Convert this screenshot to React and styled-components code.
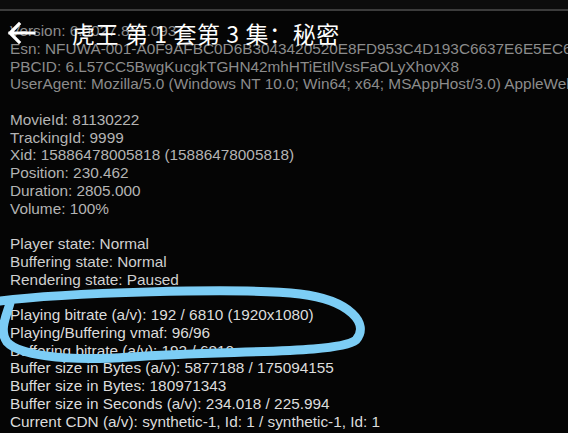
import React from 'react';
import styled, { createGlobalStyle } from 'styled-components';

const Global = createGlobalStyle`
  html, body {
    margin: 0;
    padding: 0;
    background: #050505;
    overflow: hidden;
  }
`;

const Screen = styled.div`
  position: relative;
  width: 568px;
  height: 433px;
  overflow: hidden;
  background: #050505;
  font-family: "Liberation Sans", Arial, sans-serif;
`;

const TopBar = styled.div`
  height: 9px;
  background: #0c0c0c;
  border-bottom: 2px solid #3c3c3c;
`;

const Info = styled.div`
  display: flex;
  flex-direction: column;
  padding: 11px 0 0 10px;
  white-space: nowrap;
`;

const Group = styled.div`
  display: flex;
  flex-direction: column;
  color: ${(p) => p.$color};
  margin-bottom: ${(p) => (p.$last ? 0 : '17.75px')};
`;

const Line = styled.div`
  font-size: 15.35px;
  line-height: 17.75px;
  height: 17.75px;
`;

const Header = styled.div`
  position: absolute;
  top: 20px;
  left: 6px;
  display: flex;
  align-items: center;
  gap: 36px;
  color: #fff;
`;

const Title = styled.div`
  font-family: "Noto Sans CJK SC", "Noto Sans CJK TC", sans-serif;
  font-size: 23px;
  line-height: 26px;
  letter-spacing: 0.6px;
`;

const Marker = styled.svg`
  position: absolute;
  left: 0;
  top: 0;
  pointer-events: none;
`;

const groups = [
  {
    color: '#8c8c8c',
    lines: [
      'Version: 6.0027.851.093',
      'Esn: NFUWA-001-A0F9AFBC0D6B3043420520E8FD953C4D193C6637E6E5EC6E8A',
      'PBCID: 6.L57CC5BwgKucgkTGHN42mhHTiEtIlVssFaOLyXhovX8',
      'UserAgent: Mozilla/5.0 (Windows NT 10.0; Win64; x64; MSAppHost/3.0) AppleWebKit/537.36',
    ],
  },
  {
    color: '#b4b4b4',
    lines: [
      'MovieId: 81130222',
      'TrackingId: 9999',
      'Xid: 15886478005818 (15886478005818)',
      'Position: 230.462',
      'Duration: 2805.000',
      'Volume: 100%',
    ],
  },
  {
    color: '#d0d0d0',
    lines: ['Player state: Normal', 'Buffering state: Normal', 'Rendering state: Paused'],
  },
  {
    color: '#dcdcdc',
    lines: [
      'Playing bitrate (a/v): 192 / 6810 (1920x1080)',
      'Playing/Buffering vmaf: 96/96',
      'Buffering bitrate (a/v): 192 / 6810',
      'Buffer size in Bytes (a/v): 5877188 / 175094155',
      'Buffer size in Bytes: 180971343',
      'Buffer size in Seconds (a/v): 234.018 / 225.994',
      'Current CDN (a/v): synthetic-1, Id: 1 / synthetic-1, Id: 1',
    ],
  },
];

const BackArrow = () => (
  <svg width="30" height="24" viewBox="0 0 30 24">
    <path d="M28 12H4M13 3L4 12l9 9" fill="none" stroke="#fff" strokeWidth="3.2" strokeLinecap="square" />
  </svg>
);

export default function App() {
  return (
    <Screen>
      <Global />
      <TopBar />
      <Info>
        {groups.map((g, i) => (
          <Group key={i} $color={g.color} $last={i === groups.length - 1}>
            {g.lines.map((l) => (
              <Line key={l}>{l}</Line>
            ))}
          </Group>
        ))}
      </Info>
      <Header>
        <BackArrow />
        <Title>虎王 第 1 套第 3 集：秘密</Title>
      </Header>
      <Marker width="568" height="433">
        <path
          d="M0 301 C60 293 240 287 300 294 C350 300 370 324 356 340 C338 354 230 350 130 357 C60 362 18 354 7 342 C-2 330 8 312 10 303"
          fill="none"
          stroke="#7ccdf5"
          strokeWidth="9"
          strokeLinecap="round"
          strokeLinejoin="round"
        />
      </Marker>
    </Screen>
  );
}
